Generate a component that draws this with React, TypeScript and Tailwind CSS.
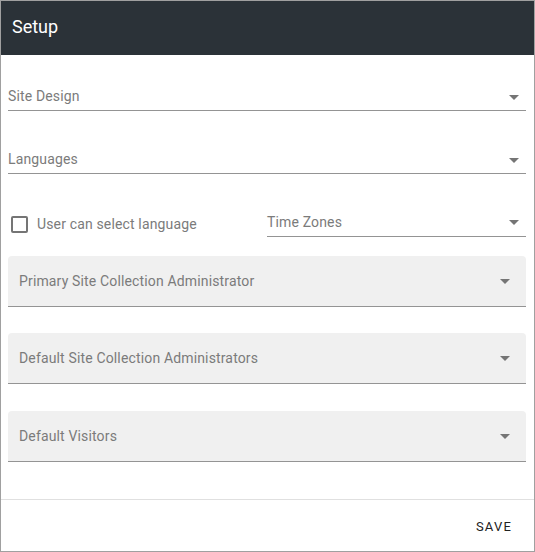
import React from "react";

const Arrow = () => (
  <svg width="24" height="24" viewBox="0 0 24 24" className="shrink-0">
    <path d="M7 10l5 5 5-5z" fill="#757575" />
  </svg>
);

const Underlined = ({ label, className = "" }: { label: string; className?: string }) => (
  <div className={`flex h-[32px] items-center justify-between border-b border-[#949494] ${className}`}>
    <span className="text-[14px] tracking-[0.15px] text-[#7b7b7b]">{label}</span>
    <Arrow />
  </div>
);

const Filled = ({ label, className = "" }: { label: string; className?: string }) => (
  <div
    className={`flex h-[51px] items-center justify-between rounded-t-[4px] border-b border-[#949494] bg-[#f0f0f0] pl-[11px] pr-[9px] ${className}`}
  >
    <span className="text-[14px] tracking-[0.15px] text-[#7b7b7b]">{label}</span>
    <Arrow />
  </div>
);

export default function App() {
  return (
    <div
      className="flex h-[552px] w-[535px] flex-col border border-[#a0a0a0] bg-white"
      style={{ fontFamily: "Roboto, 'Liberation Sans', sans-serif" }}
    >
      <div className="flex h-[54px] shrink-0 items-center bg-[#2b3238] px-[11px] pb-[3px]">
        <span className="text-[18px] text-white">Setup</span>
      </div>
      <div className="flex flex-1 flex-col pl-[7px] pr-[8px]">
        <Underlined label="Site Design" className="mt-[24px] pt-[4px]" />
        <Underlined label="Languages" className="mt-[31px] pt-[4px]" />
        <div className="mt-[31px] flex items-end">
          <div className="flex h-[32px] w-[259px] items-center pl-[3px] pt-[6px]">
            <div className="h-[17px] w-[17px] rounded-[2px] border-2 border-[#757575]" />
            <span className="ml-[9px] text-[14px] tracking-[0.15px] text-[#7b7b7b]">User can select language</span>
          </div>
          <Underlined label="Time Zones" className="flex-1 pt-[3px]" />
        </div>
        <Filled label="Primary Site Collection Administrator" className="mt-[19px]" />
        <Filled label="Default Site Collection Administrators" className="mt-[26px]" />
        <Filled label="Default Visitors" className="mt-[27px]" />
      </div>
      <div className="flex h-[52px] shrink-0 items-center justify-end border-t border-[#e0e0e0] pr-[22px] pt-[2px]">
        <span className="text-[13px] font-normal tracking-[1.2px] text-[#212121]">SAVE</span>
      </div>
    </div>
  );
}
